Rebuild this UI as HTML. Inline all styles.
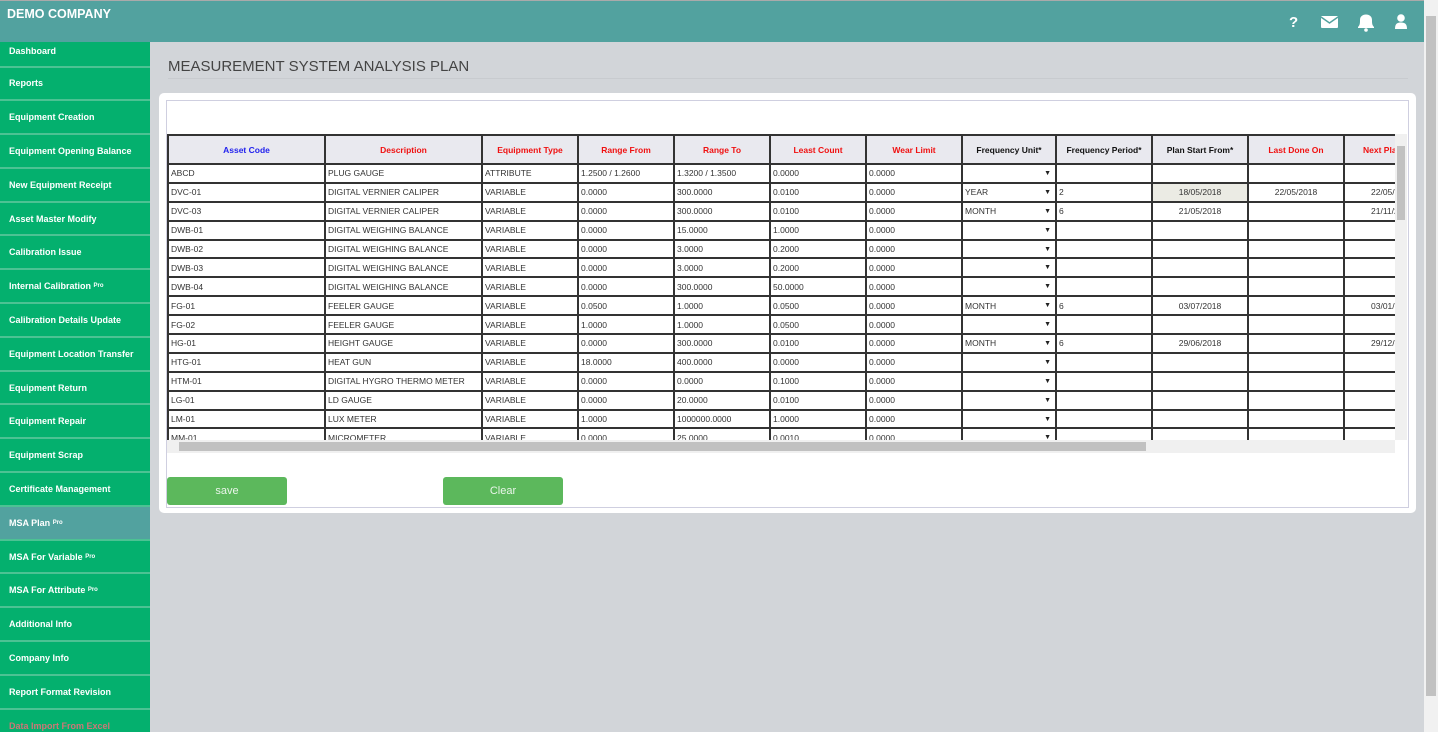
<!DOCTYPE html>
<html><head><meta charset="utf-8"><style>
*{box-sizing:border-box;margin:0;padding:0}
html,body{width:1438px;height:732px;overflow:hidden}
body{background:#d2d5d9;font-family:"Liberation Sans",Arial,sans-serif;position:relative}
.hdr{position:absolute;left:0;top:0;width:1424px;height:42px;background:#52a29f;border-top:1px solid #aaa}
.hdr .t{position:absolute;left:7px;top:6px;color:#fff;font-weight:bold;font-size:12.5px}
.side{position:absolute;left:0;top:42px;width:150px;height:690px;background:#04b06e;overflow:hidden}
.side div{height:33.8px;border-bottom:2px solid #4cc293;color:#fff;font-weight:bold;font-size:9px;padding-left:9px;display:flex;align-items:center}
.side div:first-child{height:25.5px;align-items:flex-start;padding-top:4px}
.side div.act{background:#52a29f}
.side sup{font-size:6px}
.title{position:absolute;left:168px;top:58px;font-size:15px;color:#444}
.hr{position:absolute;left:168px;top:78px;width:1240px;height:1px;background:#c8cbcf}
.card{position:absolute;left:159px;top:93px;width:1257px;height:420px;background:#fff;border-radius:5px}
.inner{position:absolute;left:166px;top:100px;width:1243px;height:408px;border:1px solid #cfcfe0}
.tw{position:absolute;left:167px;top:134px;width:1228px;height:306px;overflow:hidden}
table{border-collapse:collapse;table-layout:fixed;width:1300px}
td,th{border:2px solid #333;font-size:8.5px;color:#333;height:18.9px;padding:0 2px;white-space:nowrap;overflow:hidden;font-weight:normal}
th{height:29px;background:#e9e9ef;font-weight:bold;font-size:8.5px}
th.b{color:#2222ee}th.r{color:#f01010}th.k{color:#111}
td.c{text-align:center}
td.s{position:relative}td.s:after{content:"▼";position:absolute;right:4px;top:5px;font-size:7px;color:#222}
.vs{position:absolute;left:1395px;top:134px;width:12px;height:306px;background:#f0f0f0}
.vs i{position:absolute;left:2px;top:12px;width:8px;height:74px;background:#c1c1c1}
.hs{position:absolute;left:167px;top:440px;width:1228px;height:13px;background:#f0f0f0}
.hs i{position:absolute;left:12px;top:2px;width:967px;height:9px;background:#c1c1c1}
.btn{position:absolute;top:477px;width:120px;height:28px;background:#5cb85c;border-radius:3px;color:#eaf5ea;font-size:11px;text-align:center;line-height:28px}
.ps{position:absolute;left:1424px;top:0;width:14px;height:732px;background:#f1f1f1}
.ps i{position:absolute;left:2px;top:16px;width:10px;height:680px;background:#c1c1c1}
</style></head><body>
<div class="hdr"><div class="t">DEMO COMPANY</div>
<svg style="position:absolute;left:1288px;top:11px" width="124" height="22" viewBox="0 0 124 22" fill="#fff">
<text x="1" y="15" font-family="Liberation Sans" font-weight="bold" font-size="15" fill="#fff">?</text>
<rect x="33" y="4" width="17" height="12" rx="1"/><path d="M33 5 L41.5 11 L50 5" stroke="#52a29f" stroke-width="1.5" fill="none"/>
<path d="M70 16 L70 15 C72 13 72 11 72 8 C72 4.5 74.5 2.5 78 2.5 C81.5 2.5 84 4.5 84 8 C84 11 84 13 86 15 L86 16 Z"/><circle cx="78" cy="18" r="1.8"/>
<circle cx="113" cy="6" r="3.8"/><path d="M107 17 C107 12 109 10.5 113 10.5 C117 10.5 119 12 119 17 Z"/>
</svg></div>
<div class="side">
<div>Dashboard</div><div>Reports</div><div>Equipment Creation</div><div>Equipment Opening Balance</div><div>New Equipment Receipt</div><div>Asset Master Modify</div><div>Calibration Issue</div><div>Internal Calibration&nbsp;<sup>Pro</sup></div><div>Calibration Details Update</div><div>Equipment Location Transfer</div><div>Equipment Return</div><div>Equipment Repair</div><div>Equipment Scrap</div><div>Certificate Management</div><div class="act">MSA Plan&nbsp;<sup>Pro</sup></div><div>MSA For Variable&nbsp;<sup>Pro</sup></div><div>MSA For Attribute&nbsp;<sup>Pro</sup></div><div>Additional Info</div><div>Company Info</div><div>Report Format Revision</div><div style="color:#c77">Data Import From Excel</div>
</div>
<div class="title">MEASUREMENT SYSTEM ANALYSIS PLAN</div><div class="hr"></div>
<div class="card"></div><div class="inner"></div>
<div class="tw"><table>
<colgroup><col style="width:157px"><col style="width:157px"><col style="width:96px"><col style="width:96px"><col style="width:96px"><col style="width:96px"><col style="width:96px"><col style="width:94px"><col style="width:96px"><col style="width:96px"><col style="width:96px"><col style="width:124px"></colgroup>
<tr><th class="b">Asset Code</th><th class="r">Description</th><th class="r">Equipment Type</th><th class="r">Range From</th><th class="r">Range To</th><th class="r">Least Count</th><th class="r">Wear Limit</th><th class="k">Frequency Unit*</th><th class="k">Frequency Period*</th><th class="k">Plan Start From*</th><th class="r">Last Done On</th><th class="r" style="text-align:left;padding-left:18px">Next Plan</th></tr>
<tr><td>ABCD</td><td>PLUG GAUGE</td><td>ATTRIBUTE</td><td>1.2500 / 1.2600</td><td>1.3200 / 1.3500</td><td>0.0000</td><td>0.0000</td><td class="s"></td><td></td><td></td><td></td><td></td></tr>
<tr><td>DVC-01</td><td>DIGITAL VERNIER CALIPER</td><td>VARIABLE</td><td>0.0000</td><td>300.0000</td><td>0.0100</td><td>0.0000</td><td class="s">YEAR</td><td>2</td><td class="c" style="background:#ebebe4">18/05/2018</td><td class="c">22/05/2018</td><td style="padding-left:26px">22/05/2020</td></tr>
<tr><td>DVC-03</td><td>DIGITAL VERNIER CALIPER</td><td>VARIABLE</td><td>0.0000</td><td>300.0000</td><td>0.0100</td><td>0.0000</td><td class="s">MONTH</td><td>6</td><td class="c">21/05/2018</td><td></td><td style="padding-left:26px">21/11/2018</td></tr>
<tr><td>DWB-01</td><td>DIGITAL WEIGHING BALANCE</td><td>VARIABLE</td><td>0.0000</td><td>15.0000</td><td>1.0000</td><td>0.0000</td><td class="s"></td><td></td><td></td><td></td><td></td></tr>
<tr><td>DWB-02</td><td>DIGITAL WEIGHING BALANCE</td><td>VARIABLE</td><td>0.0000</td><td>3.0000</td><td>0.2000</td><td>0.0000</td><td class="s"></td><td></td><td></td><td></td><td></td></tr>
<tr><td>DWB-03</td><td>DIGITAL WEIGHING BALANCE</td><td>VARIABLE</td><td>0.0000</td><td>3.0000</td><td>0.2000</td><td>0.0000</td><td class="s"></td><td></td><td></td><td></td><td></td></tr>
<tr><td>DWB-04</td><td>DIGITAL WEIGHING BALANCE</td><td>VARIABLE</td><td>0.0000</td><td>300.0000</td><td>50.0000</td><td>0.0000</td><td class="s"></td><td></td><td></td><td></td><td></td></tr>
<tr><td>FG-01</td><td>FEELER GAUGE</td><td>VARIABLE</td><td>0.0500</td><td>1.0000</td><td>0.0500</td><td>0.0000</td><td class="s">MONTH</td><td>6</td><td class="c">03/07/2018</td><td></td><td style="padding-left:26px">03/01/2019</td></tr>
<tr><td>FG-02</td><td>FEELER GAUGE</td><td>VARIABLE</td><td>1.0000</td><td>1.0000</td><td>0.0500</td><td>0.0000</td><td class="s"></td><td></td><td></td><td></td><td></td></tr>
<tr><td>HG-01</td><td>HEIGHT GAUGE</td><td>VARIABLE</td><td>0.0000</td><td>300.0000</td><td>0.0100</td><td>0.0000</td><td class="s">MONTH</td><td>6</td><td class="c">29/06/2018</td><td></td><td style="padding-left:26px">29/12/2018</td></tr>
<tr><td>HTG-01</td><td>HEAT GUN</td><td>VARIABLE</td><td>18.0000</td><td>400.0000</td><td>0.0000</td><td>0.0000</td><td class="s"></td><td></td><td></td><td></td><td></td></tr>
<tr><td>HTM-01</td><td>DIGITAL HYGRO THERMO METER</td><td>VARIABLE</td><td>0.0000</td><td>0.0000</td><td>0.1000</td><td>0.0000</td><td class="s"></td><td></td><td></td><td></td><td></td></tr>
<tr><td>LG-01</td><td>LD GAUGE</td><td>VARIABLE</td><td>0.0000</td><td>20.0000</td><td>0.0100</td><td>0.0000</td><td class="s"></td><td></td><td></td><td></td><td></td></tr>
<tr><td>LM-01</td><td>LUX METER</td><td>VARIABLE</td><td>1.0000</td><td>1000000.0000</td><td>1.0000</td><td>0.0000</td><td class="s"></td><td></td><td></td><td></td><td></td></tr>
<tr><td>MM-01</td><td>MICROMETER</td><td>VARIABLE</td><td>0.0000</td><td>25.0000</td><td>0.0010</td><td>0.0000</td><td class="s"></td><td></td><td></td><td></td><td></td></tr>
</table></div>
<div class="vs"><i></i></div><div class="hs"><i></i></div>
<div class="btn" style="left:167px">save</div><div class="btn" style="left:443px">Clear</div>
<div class="ps"><i></i></div>
</body></html>
